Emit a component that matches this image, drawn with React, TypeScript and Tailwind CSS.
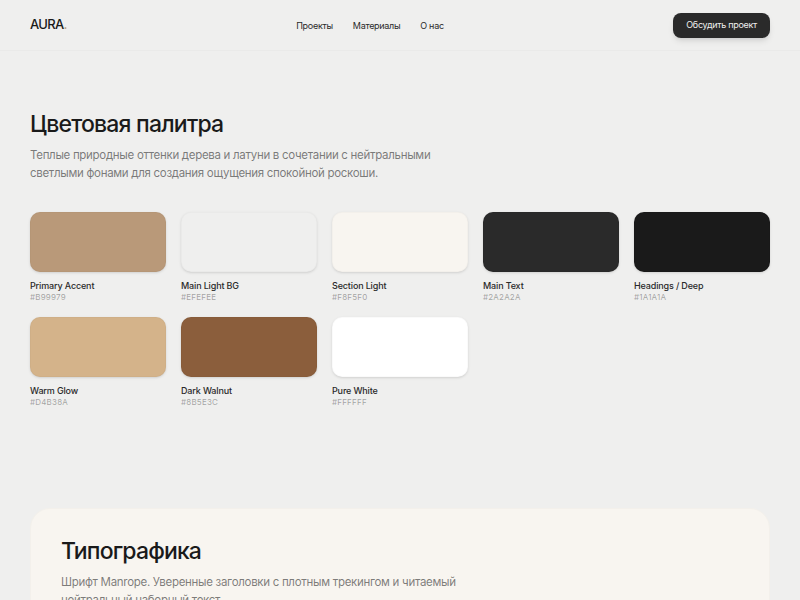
const swatches = [
  { name: "Primary Accent", hex: "#B99979", bg: "bg-[#b99979]" },
  { name: "Main Light BG", hex: "#EFEFEE", bg: "bg-[#efefee]" },
  { name: "Section Light", hex: "#F8F5F0", bg: "bg-[#f8f5f0]" },
  { name: "Main Text", hex: "#2A2A2A", bg: "bg-[#2a2a2a]" },
  { name: "Headings / Deep", hex: "#1A1A1A", bg: "bg-[#1a1a1a]" },
  { name: "Warm Glow", hex: "#D4B38A", bg: "bg-[#d4b38a]" },
  { name: "Dark Walnut", hex: "#8B5E3C", bg: "bg-[#8b5e3c]" },
  { name: "Pure White", hex: "#FFFFFF", bg: "bg-white" },
];

export default function App() {
  return (
    <div className="h-screen overflow-hidden bg-[#efefee] font-['Inter','Liberation_Sans',sans-serif] text-[#2a2a2a]">
      <header className="flex h-[51px] items-center justify-between border-b border-[#eaeae9] px-[30px]">
        <div className="text-[13px] font-medium tracking-[-0.7px] text-[#1a1a1a]">
          AURA<span className="text-[#b99979]">.</span>
        </div>
        <nav className="flex gap-[20px] pt-px text-[9px] tracking-[-0.3px] text-[#2a2a2a]">
          <a>Проекты</a>
          <a>Материалы</a>
          <a>О нас</a>
        </nav>
        <button className="h-[25px] rounded-[8px] bg-[#2a2a2a] px-[13px] text-[9px] tracking-[-0.3px] text-[#efefee] shadow-md">
          Обсудить проект
        </button>
      </header>

      <main className="px-[30px]">
        <section className="pt-[57px]">
          <h2 className="text-[23px] leading-[32px] font-medium tracking-[-0.8px] text-[#1a1a1a]">
            Цветовая палитра
          </h2>
          <p className="mt-[6px] max-w-[435px] text-[11.5px] leading-[18px] tracking-[-0.3px] text-[#2a2a2a]/60">
            Теплые природные оттенки дерева и латуни в сочетании с нейтральными светлыми фонами для создания ощущения спокойной роскоши.
          </p>
          <div className="mt-[30px] grid grid-cols-5 gap-x-[15px] gap-y-[14px]">
            {swatches.map((s) => (
              <div key={s.name}>
                <div className={`h-[60px] rounded-[10px] border border-black/[0.02] shadow-sm ${s.bg}`} />
                <p className="mt-[8px] text-[9px] leading-[12px] font-medium tracking-[-0.15px] text-[#2a2a2a]">{s.name}</p>
                <p className="text-[8px] leading-[11px] tracking-[0.2px] text-[#2a2a2a]/40">{s.hex}</p>
              </div>
            ))}
          </div>
        </section>

        <section className="mt-[100px] rounded-[20px] border border-[#f3f0eb] bg-[#f8f5f0] px-[30px] pt-[29px] pb-[30px]">
          <h2 className="text-[23px] leading-[26px] font-medium tracking-[-0.85px] text-[#1a1a1a]">
            Типографика
          </h2>
          <p className="mt-[9px] max-w-[435px] text-[11.5px] leading-[18px] tracking-[-0.3px] text-[#2a2a2a]/60">
            Шрифт Manrope. Уверенные заголовки с плотным трекингом и читаемый нейтральный наборный текст.
          </p>
        </section>
      </main>
    </div>
  );
}
